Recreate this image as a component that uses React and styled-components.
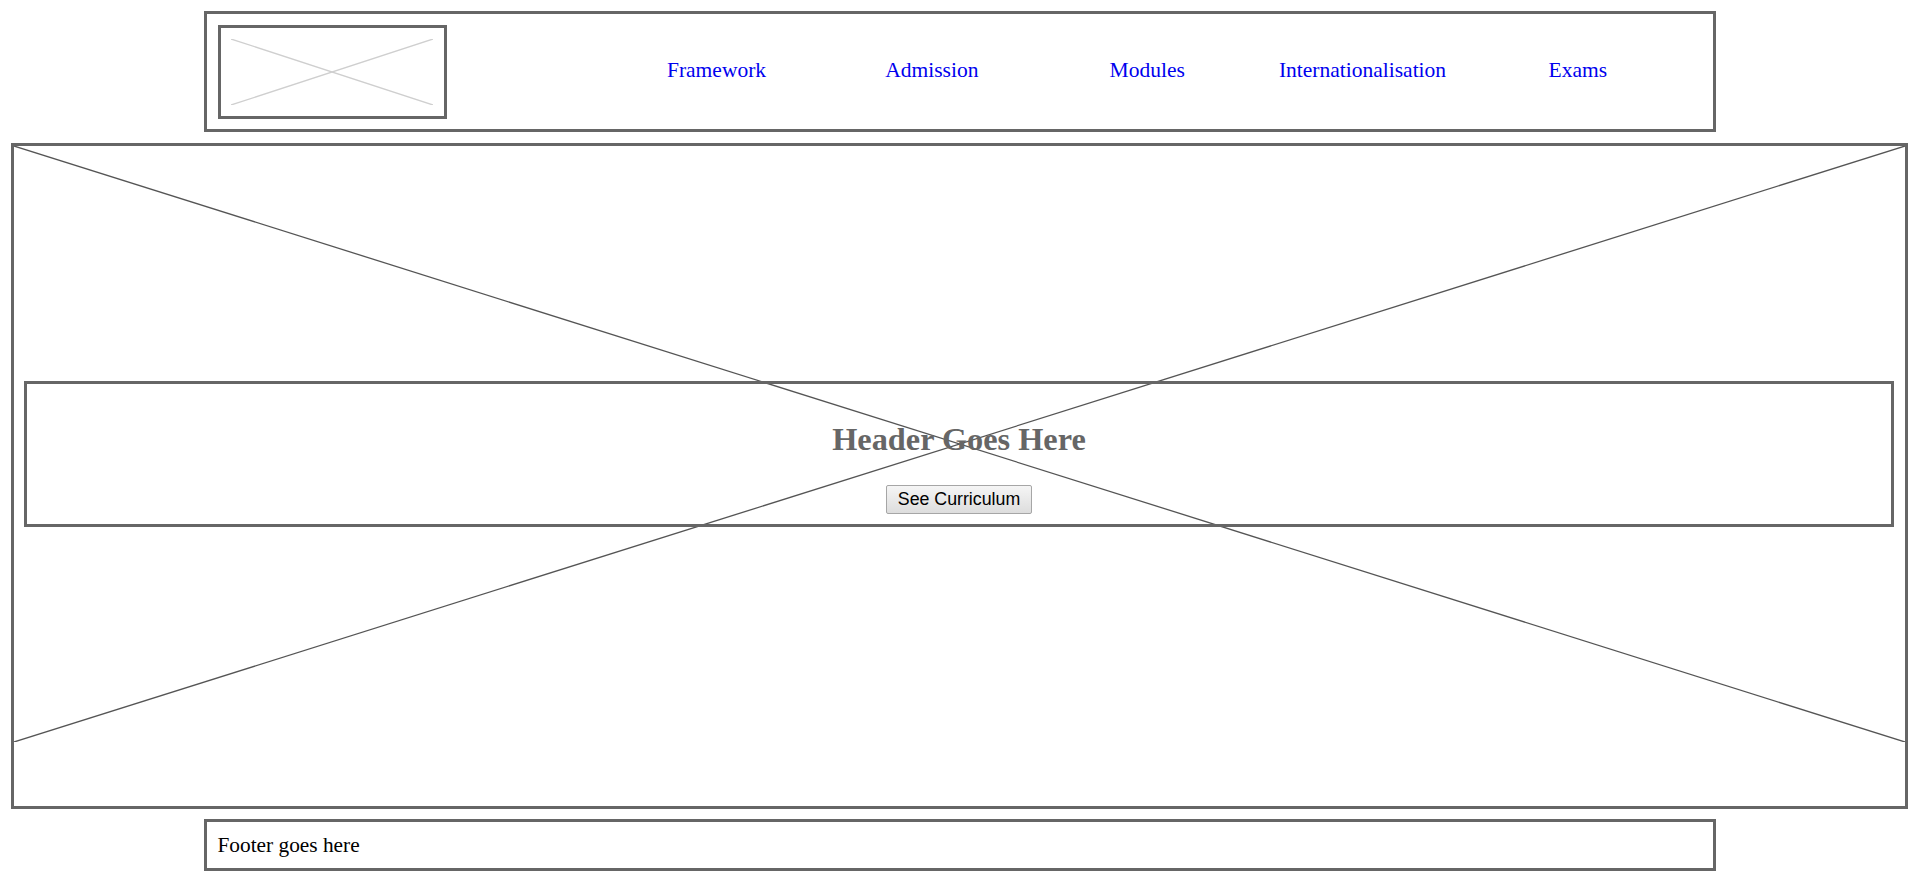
import React from 'react'
import styled, { createGlobalStyle } from 'styled-components'

const links = ['Framework', 'Admission', 'Modules', 'Internationalisation', 'Exams']

const GlobalStyle = createGlobalStyle`
  * { box-sizing: border-box; }
  html, body { background: #fff; }
  body {
    margin: 11px 12px 16px 11px;
    font-family: "Liberation Serif", "Times New Roman", serif;
    font-size: 21.33px;
    color: #000;
  }
`

const Nav = styled.nav`
  display: flex;
  align-items: center;
  width: 1512px;
  height: 121px;
  margin: 0 auto;
  padding: 0 11px;
  border: 3px solid #666;
`

const Logo = styled.div`
  display: flex;
  width: 229px;
  height: 94px;
  padding: 11px 11px 11px 10px;
  border: 3px solid #666;
  svg { width: 100%; height: 100%; display: block; }
`

const LinkList = styled.ul`
  display: flex;
  margin: 0 16px 2px auto;
  padding: 0;
  list-style: none;
`

const LinkItem = styled.li`
  width: 215.33px;
  text-align: center;
  a {
    color: #0000ee;
    text-decoration: none;
    font-size: 21.5px;
  }
`

const Hero = styled.section`
  display: grid;
  height: 666px;
  margin-top: 11px;
  border: 3px solid #666;
`

const HeroPicture = styled.svg`
  grid-area: 1 / 1;
  align-self: start;
  width: 100%;
  height: 596px;
  display: block;
`

const HeaderBox = styled.div`
  grid-area: 1 / 1;
  align-self: start;
  height: 146px;
  margin: 235px 11px 0 10px;
  padding-top: 37px;
  border: 3px solid #666;
  text-align: center;
`

const Title = styled.h2`
  margin: 0;
  font-family: "Liberation Serif", "Times New Roman", serif;
  font-size: 32.3px;
  font-weight: 700;
  line-height: 36px;
  color: #666;
`

const Button = styled.button`
  display: block;
  width: 146px;
  height: 29px;
  margin: 28px auto 0;
  padding: 0;
  font-family: "Liberation Sans", Arial, sans-serif;
  font-size: 17.78px;
  color: #000;
  background: linear-gradient(#f5f5f5, #dddddd);
  border: 1px solid #a6a6a6;
  border-radius: 2px;
`

const Footer = styled.footer`
  width: 1512px;
  height: 52px;
  margin: 10px auto 0;
  padding: 11px;
  line-height: 24px;
  border: 3px solid #666;
`

function Cross({ color, width }) {
  return (
    <>
      <line x1="0" y1="0" x2="100" y2="100" stroke={color} strokeWidth={width} vectorEffect="non-scaling-stroke" />
      <line x1="100" y1="0" x2="0" y2="100" stroke={color} strokeWidth={width} vectorEffect="non-scaling-stroke" />
    </>
  )
}

export default function App() {
  return (
    <>
      <GlobalStyle />
      <Nav>
        <Logo>
          <svg viewBox="0 0 100 100" preserveAspectRatio="none">
            <Cross color="#cfcfcf" width={1.3} />
          </svg>
        </Logo>
        <LinkList>
          {links.map((l) => (
            <LinkItem key={l}>
              <a href="#">{l}</a>
            </LinkItem>
          ))}
        </LinkList>
      </Nav>
      <Hero>
        <HeroPicture viewBox="0 0 100 100" preserveAspectRatio="none">
          <Cross color="#555" width={1.3} />
        </HeroPicture>
        <HeaderBox>
          <Title>Header Goes Here</Title>
          <Button>See Curriculum</Button>
        </HeaderBox>
      </Hero>
      <Footer>Footer goes here</Footer>
    </>
  )
}
